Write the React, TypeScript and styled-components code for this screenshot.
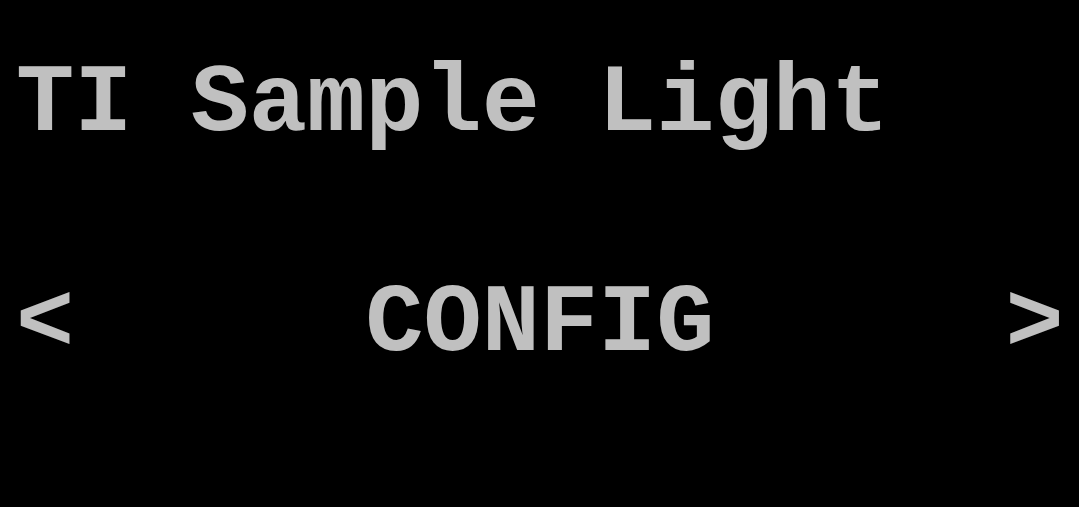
import * as React from "react";
import styled, { createGlobalStyle } from "styled-components";

const GlobalStyle = createGlobalStyle`
  html, body {
    margin: 0;
    background: #000;
  }
`;

const Screen = styled.div`
  background-color: #000;
  color: #c0c0c0;
  font-family: "Liberation Mono", "Courier New", monospace;
  font-weight: bold;
  font-size: 97px;
  line-height: 110px;
  padding: 49px 0 0 16px;
`;

const Line = styled.div`
  white-space: pre;
  height: 110px;
`;

const lines = ["TI Sample Light", "", "<     CONFIG     >", ""];

const App: React.FC = () => {
  return (
    <>
      <GlobalStyle />
      <Screen>
        {lines.map((text, index) => (
          <Line key={index}>{text}</Line>
        ))}
      </Screen>
    </>
  );
};

export default App;
